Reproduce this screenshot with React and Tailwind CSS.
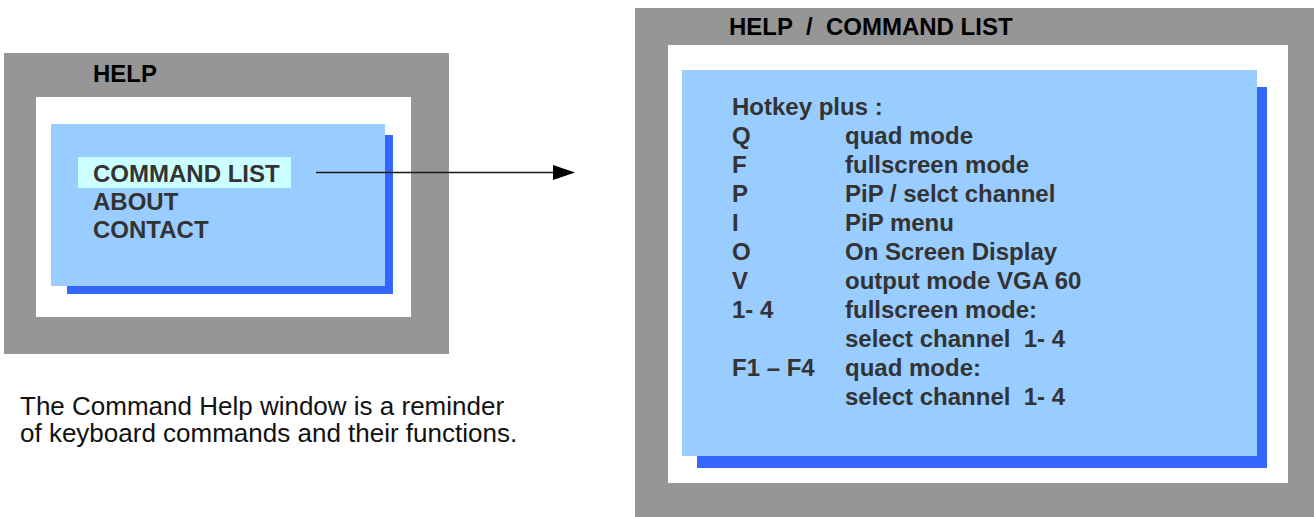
const font = { fontFamily: '"Liberation Sans", Arial, sans-serif' };

const menu = ['COMMAND LIST', 'ABOUT', 'CONTACT'];

const commands = [
    { key: 'Hotkey plus :', desc: '' },
    { key: 'Q', desc: 'quad mode' },
    { key: 'F', desc: 'fullscreen mode' },
    { key: 'P', desc: 'PiP / selct channel' },
    { key: 'I', desc: 'PiP menu' },
    { key: 'O', desc: 'On Screen Display' },
    { key: 'V', desc: 'output mode VGA 60' },
    { key: '1- 4', desc: 'fullscreen mode:' },
    { key: '', desc: 'select channel  1- 4' },
    { key: 'F1 – F4', desc: 'quad mode:' },
    { key: '', desc: 'select channel  1- 4' },
];

const HelpWindow = () => (
    <div className="w-[445px] h-[301px] bg-[#969696] flex flex-col">
        <div className="h-[44px] pt-[7px] pl-[89px] text-[24px] leading-[28px] font-bold text-black">HELP</div>
        <div className="ml-[32px] w-[375px] h-[220px] bg-white pt-[27px] pl-[15px]">
            <div className="relative w-[334px] h-[162px]">
                {/* offset shadow */}
                <div className="absolute left-[16px] top-[11px] w-[326px] h-[159px] bg-[#3366ff]" />
                <div className="relative w-full h-full bg-[#99ccff] pt-[33px] pl-[27px] text-[24px] font-bold text-[#333333]">
                    <div className="w-[213px] h-[31px] bg-[#ccffff] pl-[15px] pt-[1px] leading-[31px]">{menu[0]}</div>
                    {menu.slice(1).map(item => (
                        <div key={item} className="pl-[15px] leading-[28px]">{item}</div>
                    ))}
                </div>
            </div>
        </div>
    </div>
);

const CommandList = () => (
    <div className="w-[679px] h-[509px] bg-[#969696] flex flex-col">
        <div className="h-[37px] pt-[5px] pl-[94px] text-[24px] leading-[28px] font-bold text-black whitespace-pre">
            HELP  /  COMMAND LIST
        </div>
        <div className="ml-[33px] w-[620px] h-[438px] bg-white pt-[25px] pl-[14px]">
            <div className="relative w-[575px] h-[386px]">
                <div className="absolute left-[15px] top-[17px] w-[570px] h-[381px] bg-[#3366ff]" />
                <div className="relative w-full h-full bg-[#99ccff] pt-[22px] pl-[50px] text-[24px] leading-[29px] font-bold text-[#333333]">
                    {commands.map((c, i) => (
                        <div key={i} className="flex whitespace-pre">
                            <span className="w-[113px] shrink-0">{c.key}</span>
                            <span>{c.desc}</span>
                        </div>
                    ))}
                </div>
            </div>
        </div>
    </div>
);

export default function App() {
    return (
        <div className="relative w-[1314px] h-[517px] overflow-hidden bg-white flex" style={font}>
            <div className="ml-[4px] mt-[53px] w-[445px] shrink-0 flex flex-col">
                <HelpWindow />
                <p className="mt-[39px] pl-[16px] text-[26px] leading-[27px] text-[#111111] whitespace-nowrap">
                    The Command Help window is a reminder
                    <br />
                    of keyboard commands and their functions.
                </p>
            </div>
            <div className="ml-[186px] mt-[8px] shrink-0">
                <CommandList />
            </div>

            {/* arrow from COMMAND LIST to the detail window */}
            <svg className="absolute left-[316px] top-[164px]" width="260" height="17" viewBox="0 0 260 17">
                <line x1="0" y1="8.5" x2="240" y2="8.5" stroke="#1a1a1a" strokeWidth="1.5" />
                <polygon points="237,1 259,8.5 237,16" fill="#000" />
            </svg>
        </div>
    );
}
